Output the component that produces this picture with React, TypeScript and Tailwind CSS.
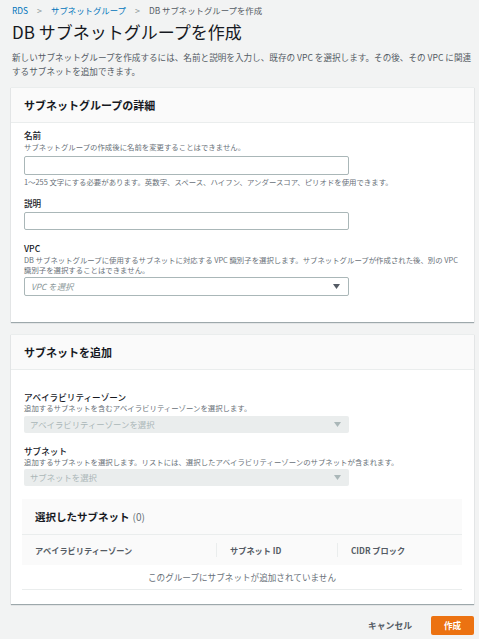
import { ReactNode } from "react";

const font = "font-['Noto_Sans_CJK_JP','Noto_Sans',sans-serif]";

function Triangle({ muted }: { muted?: boolean }) {
  return (
    <svg width="7" height="5" viewBox="0 0 7 5" className="shrink-0">
      <path d="M0 0h7L3.5 5z" fill={muted ? "#aab7b8" : "#545b64"} />
    </svg>
  );
}

function Card({ title, children, bodyClass }: { title: string; children: ReactNode; bodyClass: string }) {
  return (
    <section className="bg-white border-t border-[#eaeded] shadow-[0_1px_1px_0_rgba(0,28,36,0.35)]">
      <div className="h-[35px] flex items-center px-[13px] bg-[#fafafa] border-b border-[#eaeded]">
        <h2 className="text-[11px] font-bold text-[#16191f]">{title}</h2>
      </div>
      <div className={bodyClass}>{children}</div>
    </section>
  );
}

function Label({ children, className = "" }: { children: ReactNode; className?: string }) {
  return <div className={`text-[8.6px] leading-[11px] font-medium text-[#16191f] ${className}`}>{children}</div>;
}

function Hint({ children, className = "" }: { children: ReactNode; className?: string }) {
  return <div className={`text-[7.4px] leading-[9.5px] text-[#687078] ${className}`}>{children}</div>;
}

export default function App() {
  return (
    <div className={`min-h-screen bg-[#f2f3f3] pl-[11px] pr-[5px] pt-[4px] pb-[6px] text-[#16191f] ${font}`}>
      <nav className="h-[13px] flex items-center gap-[9px] text-[8.4px] pl-[1px]">
        <span className="text-[#0073bb]">RDS</span>
        <span className="text-[#879596] text-[9px]">&gt;</span>
        <span className="text-[#0073bb]">サブネットグループ</span>
        <span className="text-[#879596] text-[9px]">&gt;</span>
        <span className="text-[#545b64]">DB サブネットグループを作成</span>
      </nav>

      <h1 className="mt-[4px] text-[17px] leading-[22px] pl-[1px]">DB サブネットグループを作成</h1>

      <p className="mt-[7px] text-[8.6px] leading-[14px] text-[#545b64] pl-[1px]">
        新しいサブネットグループを作成するには、名前と説明を入力し、既存の VPC を選択します。その後、その VPC に関連するサブネットを追加できます。
      </p>

      <div className="mt-[9px]">
        <Card title="サブネットグループの詳細" bodyClass="px-[13px] pt-[7px] pb-[26px]">
          <Label>名前</Label>
          <Hint className="mt-[1px]">サブネットグループの作成後に名前を変更することはできません。</Hint>
          <div className="mt-[4px] w-[325px] h-[19px] border border-[#aab7b8] rounded-[2px] bg-white" />
          <Hint className="mt-[2px]">1〜255 文字にする必要があります。英数字、スペース、ハイフン、アンダースコア、ピリオドを使用できます。</Hint>

          <Label className="mt-[12px]">説明</Label>
          <div className="mt-[3px] w-[325px] h-[18px] border border-[#aab7b8] rounded-[2px] bg-white" />

          <Label className="mt-[13px]">VPC</Label>
          <Hint className="mt-[1px] leading-[10px]">
            DB サブネットグループに使用するサブネットに対応する VPC 識別子を選択します。サブネットグループが作成された後、別の VPC 識別子を選択することはできません。
          </Hint>
          <div className="mt-[2px] w-[325px] h-[19px] border border-[#aab7b8] rounded-[2px] bg-white flex items-center justify-between pl-[6px] pr-[8px]">
            <span className="text-[8.4px] italic text-[#879596]">VPC を選択</span>
            <Triangle />
          </div>
        </Card>
      </div>

      <div className="mt-[12px]">
        <Card title="サブネットを追加" bodyClass="px-[12px] pt-[22px] pb-[14px]">
          <Label className="pl-[1px]">アベイラビリティーゾーン</Label>
          <Hint className="pl-[1px]">追加するサブネットを含むアベイラビリティーゾーンを選択します。</Hint>
          <div className="mt-[3px] ml-[1px] w-[325px] h-[17px] bg-[#eaeded] rounded-[2px] flex items-center justify-between pl-[6px] pr-[8px]">
            <span className="text-[8.4px] text-[#aab7b8]">アベイラビリティーゾーンを選択</span>
            <Triangle muted />
          </div>

          <Label className="mt-[13px] pl-[1px]">サブネット</Label>
          <Hint className="pl-[1px]">追加するサブネットを選択します。リストには、選択したアベイラビリティーゾーンのサブネットが含まれます。</Hint>
          <div className="mt-[3px] ml-[1px] w-[325px] h-[17px] bg-[#eaeded] rounded-[2px] flex items-center justify-between pl-[6px] pr-[8px]">
            <span className="text-[8.4px] text-[#aab7b8]">サブネットを選択</span>
            <Triangle muted />
          </div>

          <div className="mt-[13px] ml-[-1px]">
            <div className="h-[36px] bg-[#fafafa] flex items-center px-[13px] border-b border-[#eaeded]">
              <span className="text-[10.5px] font-bold">選択したサブネット</span>
              <span className="text-[10px] text-[#687078] ml-[3px]">(0)</span>
            </div>
            <div className="h-[30px] bg-[#fafafa] grid grid-cols-[194px_121px_1fr] items-center text-[8.2px] font-bold text-[#545b64]">
              <div className="pl-[13px]">アベイラビリティーゾーン</div>
              <div className="flex items-center">
                <span className="h-[14px] border-l border-[#eaeded]" />
                <span className="pl-[13px]">サブネット ID</span>
              </div>
              <div className="flex items-center">
                <span className="h-[14px] border-l border-[#eaeded]" />
                <span className="pl-[13px]">CIDR ブロック</span>
              </div>
            </div>
            <div className="h-[25px] flex items-center justify-center border-b border-[#eaeded] text-[8.6px] text-[#687078]">
              このグループにサブネットが追加されていません
            </div>
          </div>
        </Card>
      </div>

      <div className="mt-[12px] flex items-center justify-end gap-[19px]">
        <button className="text-[8.8px] font-bold text-[#545b64]">キャンセル</button>
        <button className="w-[43px] h-[19px] bg-[#ec7211] text-white text-[8.6px] font-bold rounded-[2px]">作成</button>
      </div>
    </div>
  );
}
